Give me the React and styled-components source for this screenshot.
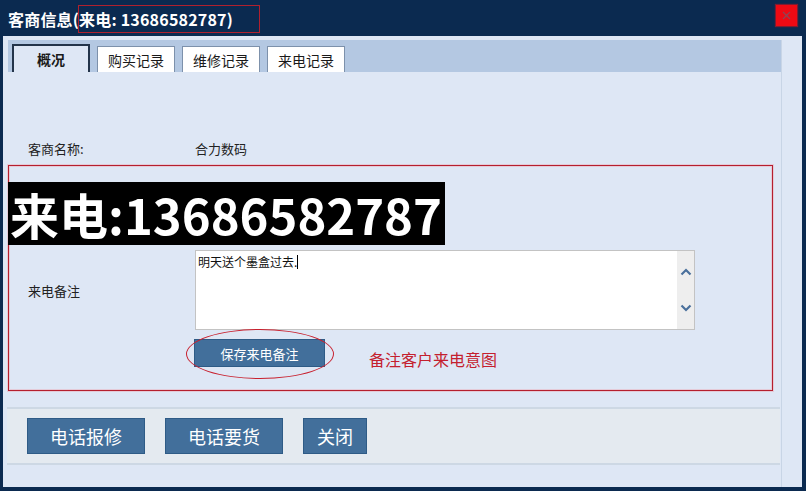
import styled, { createGlobalStyle } from "styled-components";

const GlobalStyle = createGlobalStyle`
  html, body {
    margin: 0;
    padding: 0;
    background: #0b2a50;
  }
  * {
    box-sizing: border-box;
  }
`;

const FONT = `"Noto Sans CJK SC", "Noto Sans", "Liberation Sans", sans-serif`;

export default function App() {
  return (
    <>
      <GlobalStyle />
      <Window>
        <TitleBar>
          <Title>客商信息(来电: 13686582787)</Title>
          <TitleMark />
          <CloseBtn>
            <svg width="9" height="9" viewBox="0 0 9 9">
              <path d="M1 1 L8 8 M8 1 L1 8" stroke="#8c4656" strokeWidth="1.3" />
            </svg>
          </CloseBtn>
        </TitleBar>

        <Panel>
          <Body>
            <TabBar>
              <Tab active>概况</Tab>
              <Tab>购买记录</Tab>
              <Tab>维修记录</Tab>
              <Tab>来电记录</Tab>
            </TabBar>

            <Content>
              <Row>
                <Label>客商名称:</Label>
                <Value>合力数码</Value>
              </Row>

              <MarkBox>
                <Banner>来电:13686582787</Banner>
                <RemarkRow>
                  <Label>来电备注</Label>
                  <Memo>
                    <MemoText>
                      明天送个墨盒过去.<Caret />
                    </MemoText>
                    <ScrollCol>
                      <svg width="12" height="8" viewBox="0 0 12 8">
                        <path d="M1.5 6.5 L6 2 L10.5 6.5" fill="none" stroke="#4a709c" strokeWidth="2.2" />
                      </svg>
                      <svg width="12" height="8" viewBox="0 0 12 8">
                        <path d="M1.5 1.5 L6 6 L10.5 1.5" fill="none" stroke="#4a709c" strokeWidth="2.2" />
                      </svg>
                    </ScrollCol>
                  </Memo>
                </RemarkRow>
                <SaveRow>
                  <SaveWrap>
                    <Ellipse />
                    <BlueBtn size="small">保存来电备注</BlueBtn>
                  </SaveWrap>
                  <Hint>备注客户来电意图</Hint>
                </SaveRow>
              </MarkBox>
            </Content>

            <Toolbar>
              <BlueBtn size="big" w={118}>电话报修</BlueBtn>
              <BlueBtn size="big" w={118}>电话要货</BlueBtn>
              <BlueBtn size="big" w={64}>关闭</BlueBtn>
            </Toolbar>
          </Body>
        </Panel>
      </Window>
    </>
  );
}

const Window = styled.div`
  width: 806px;
  height: 491px;
  background: #0b2a50;
  display: flex;
  flex-direction: column;
  font-family: ${FONT};
`;

const TitleBar = styled.div`
  position: relative;
  height: 36px;
  display: flex;
  align-items: center;
  padding: 0 8px;
`;

const Title = styled.div`
  color: #fff;
  font-size: 16px;
  font-weight: bold;
  letter-spacing: 0.2px;
  margin-top: 1px;
`;

const TitleMark = styled.div`
  position: absolute;
  left: 78px;
  top: 5px;
  width: 182px;
  height: 28px;
  border: 1px solid #b0202e;
`;

const CloseBtn = styled.div`
  position: absolute;
  right: 9px;
  top: 5px;
  width: 21px;
  height: 21px;
  background: #ee0a14;
  box-shadow: 0 0 1px 1px rgba(200, 20, 30, 0.6);
  display: flex;
  align-items: center;
  justify-content: center;
`;

const Panel = styled.div`
  margin: 0 4px 4px 3px;
  flex: 1;
  background: #dee7f5;
  padding-top: 4px;
  display: flex;
`;

const Body = styled.div`
  margin-left: 5px;
  width: 774px;
  border-right: 1px solid #c8d5e6;
  display: flex;
  flex-direction: column;
`;

const TabBar = styled.div`
  height: 32px;
  background: #b4c8e2;
  display: flex;
  align-items: flex-end;
  gap: 7px;
  padding-left: 4px;
`;

const Tab = styled.div`
  width: 78px;
  height: ${({ active }) => (active ? 28 : 26)}px;
  display: flex;
  align-items: center;
  justify-content: center;
  font-size: 14px;
  font-weight: ${({ active }) => (active ? "bold" : "normal")};
  color: #1a1a1a;
  background: ${({ active }) => (active ? "#dee7f5" : "#fff")};
  border: ${({ active }) => (active ? "2px solid #23344a" : "1px solid #7d91ab")};
  border-bottom: none;
`;

const Content = styled.div`
  padding-top: 68px;
  display: flex;
  flex-direction: column;
`;

const Row = styled.div`
  display: flex;
  align-items: center;
  padding-left: 20px;
  height: 16px;
  margin-bottom: 9px;
`;

const Label = styled.div`
  width: 167px;
  font-size: 13px;
  color: #222;
`;

const Value = styled.div`
  font-size: 13px;
  color: #222;
`;

const MarkBox = styled.div`
  width: 765px;
  height: 226px;
  border: 1px solid #b51f2e;
  box-shadow: 0 0 0 1px rgba(240, 150, 160, 0.35), inset 0 0 0 1px rgba(240, 150, 160, 0.35);
  padding-top: 16px;
  display: flex;
  flex-direction: column;
`;

const Banner = styled.div`
  align-self: flex-start;
  margin-left: -1px;
  background: #000;
  color: #fff;
  font-weight: bold;
  font-size: 49px;
  height: 63px;
  line-height: 63px;
  padding: 0 3px 0 2px;
  white-space: nowrap;
`;

const RemarkRow = styled.div`
  display: flex;
  align-items: center;
  padding-left: 19px;
  margin-top: 5px;
`;

const Memo = styled.div`
  width: 500px;
  height: 80px;
  border: 1px solid #c3c3c3;
  background: #fff;
  display: flex;
`;

const MemoText = styled.div`
  flex: 1;
  padding: 3px 2px;
  font-size: 12px;
  line-height: 16px;
  color: #111;
`;

const Caret = styled.span`
  display: inline-block;
  width: 1px;
  height: 14px;
  background: #000;
  vertical-align: -2px;
`;

const ScrollCol = styled.div`
  width: 17px;
  background: #eeeeee;
  display: flex;
  flex-direction: column;
  align-items: center;
  justify-content: space-between;
  padding: 17px 0 17px;
`;

const SaveRow = styled.div`
  display: flex;
  align-items: center;
  padding-left: 185px;
  margin-top: 5px;
`;

const SaveWrap = styled.div`
  position: relative;
`;

const Ellipse = styled.div`
  position: absolute;
  left: -8px;
  top: -10px;
  width: 148px;
  height: 50px;
  border: 1px solid #c8202e;
  border-radius: 50%;
  pointer-events: none;
`;

const BlueBtn = styled.div`
  display: flex;
  align-items: center;
  justify-content: center;
  background: #426f9b;
  border: 1px solid #2e5b86;
  color: #fff;
  width: ${({ size, w }) => (size === "small" ? 131 : w)}px;
  height: ${({ size }) => (size === "small" ? 28 : 36)}px;
  font-size: ${({ size }) => (size === "small" ? 13 : 18)}px;
`;

const Hint = styled.div`
  margin-left: 44px;
  margin-top: 12px;
  font-size: 16px;
  color: #c4202e;
`;

const Toolbar = styled.div`
  margin: 16px 0 0 -1px;
  width: 773px;
  height: 58px;
  background: #e4eaf0;
  border-top: 2px solid #cdd8e4;
  border-bottom: 2px solid #cdd8e4;
  display: flex;
  align-items: center;
  gap: 20px;
  padding-left: 20px;
`;
